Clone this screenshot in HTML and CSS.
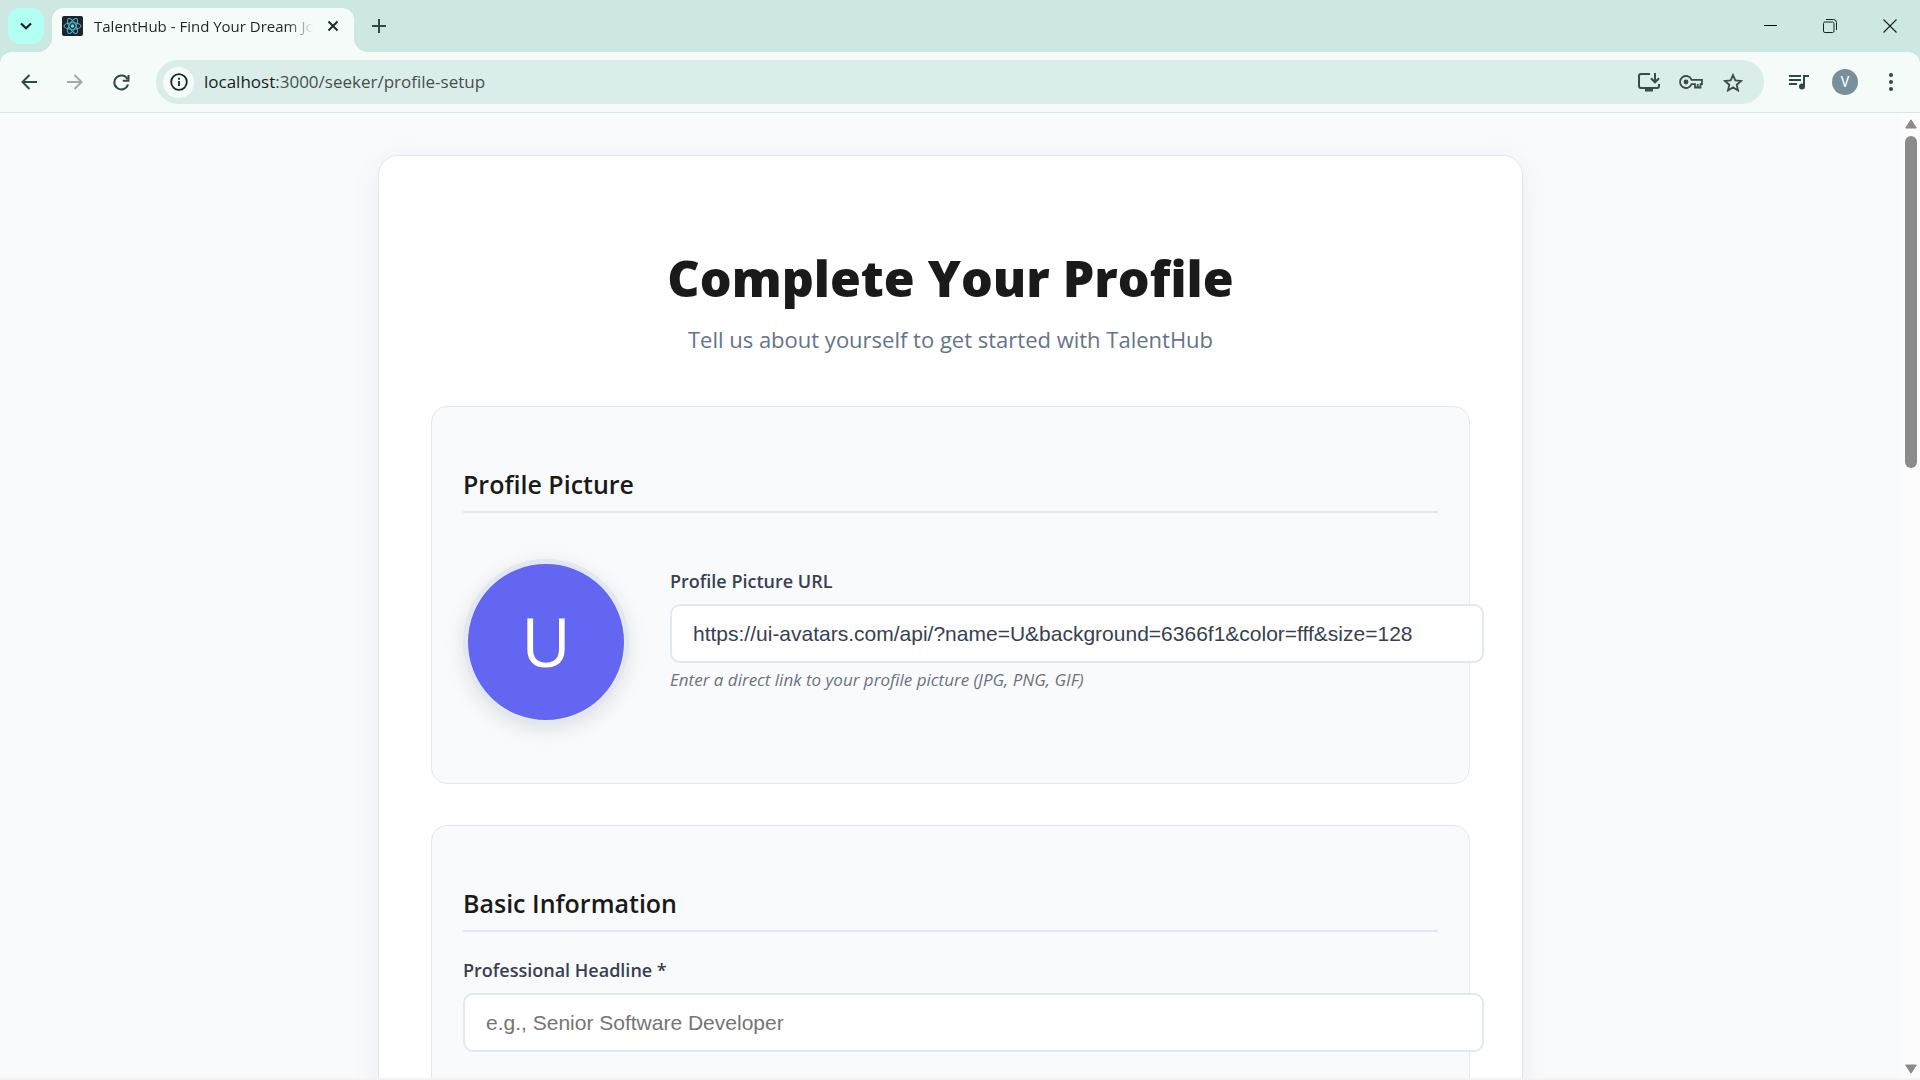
FILE: index.html
```html
<!DOCTYPE html>
<html lang="en">
<head>
<meta charset="utf-8">
<meta name="viewport" content="width=device-width, initial-scale=1">
<title>TalentHub - Find Your Dream Job</title>
<link rel="stylesheet" href="styles.css">
</head>
<body>
<div class="window">
  <header class="tabstrip">
    <button class="tab-search" aria-label="Search tabs">
      <svg width="12" height="8" viewBox="0 0 12 8"><path d="M1 1.5l5 4.7 5-4.7" fill="none" stroke="#10201d" stroke-width="2.2"/></svg>
    </button>
    <div class="tab">
      <svg class="favicon" width="21" height="20" viewBox="0 0 21 20">
        <rect width="21" height="20" rx="2" fill="#20232a"/>
        <g fill="none" stroke="#4fb8d3" stroke-width="1">
          <ellipse cx="10.500" cy="10" rx="8.500" ry="3.300"/>
          <ellipse cx="10.500" cy="10" rx="8.500" ry="3.300" transform="rotate(60 10.500 10)"/>
          <ellipse cx="10.500" cy="10" rx="8.500" ry="3.300" transform="rotate(120 10.500 10)"/>
        </g>
        <circle cx="10.500" cy="10" r="1.800" fill="#61dafb"/>
      </svg>
      <span class="tab-title">TalentHub - Find Your Dream Job</span>
      <button class="tab-close" aria-label="Close tab">
        <svg width="12" height="12" viewBox="0 0 12 12"><path d="M1.500 1.500l9 9M10.500 1.500l-9 9" stroke="#1d2b29" stroke-width="2"/></svg>
      </button>
    </div>
    <button class="new-tab" aria-label="New tab">
      <svg width="14" height="14" viewBox="0 0 14 14"><path d="M7 0v14M0 7h14" stroke="#2f4a46" stroke-width="2"/></svg>
    </button>
    <div class="window-controls">
      <button aria-label="Minimize"><svg width="14" height="14" viewBox="0 0 14 14"><path d="M1 6.500h13" stroke="#000"/></svg></button>
      <button aria-label="Restore"><svg width="14" height="14" viewBox="0 0 14 14" fill="none" stroke="#1c2423"><rect x=".5" y="3" width="10.500" height="10.500" rx="1.500"/><path d="M3 .5h7.500a3 3 0 0 1 3 3V11"/></svg></button>
      <button aria-label="Close"><svg width="14" height="14" viewBox="0 0 14 14"><path d="M.5.5l13 13M13.500.5l-13 13" stroke="#1c2423" stroke-width="1.200"/></svg></button>
    </div>
  </header>

  <nav class="toolbar">
    <button class="tool" aria-label="Back"><svg width="16" height="16" viewBox="0 0 16 16" fill="none" stroke="#2f4a46" stroke-width="2"><path d="M16 8H1.500M8.500 1L1.500 8l7 7"/></svg></button>
    <button class="tool" aria-label="Forward" disabled><svg width="16" height="16" viewBox="0 0 16 16" fill="none" stroke="#a1aaa8" stroke-width="2"><path d="M0 8h14.500M7.500 1l7 7-7 7"/></svg></button>
    <button class="tool" aria-label="Reload"><svg width="17" height="17" viewBox="0 0 17 17" fill="none" stroke="#2f4a46" stroke-width="2"><path d="M15 10.500A7 7 0 1 1 14.600 5.300"/><path d="M15.500 1v5.800H9.800"/></svg></button>
    <div class="omnibox">
      <button class="site-info" aria-label="Site information"><svg width="18" height="18" viewBox="0 0 18 18"><circle cx="9" cy="9" r="7.800" fill="none" stroke="#1c2624" stroke-width="1.800"/><path d="M9 8v5M9 4.800v2" stroke="#1c2624" stroke-width="1.800"/></svg></button>
      <a class="url" href="#profile"><span class="host">localhost</span>:3000/seeker/profile-setup</a>
      <button class="omni-tool" aria-label="Install app"><svg width="22" height="19" viewBox="0 0 22 19" fill="none" stroke="#3c4a48" stroke-width="2"><path d="M12 1H3a2 2 0 0 0-2 2v10a2 2 0 0 0 2 2h16a2 2 0 0 0 2-2v-2M17 0v9M13 5.300l4 4 4-4"/><path d="M7 17h8" stroke-width="3"/></svg></button>
      <button class="omni-tool" aria-label="Saved passwords"><svg width="24" height="14" viewBox="0 0 24 14" fill="none" stroke="#3c4a48" stroke-width="1.800"><path d="M12.600 4.800A6 6 0 1 0 12.600 9.200H16V12.500H21.500V9.200H23V4.800Z"/><circle cx="7" cy="7" r="2.400" fill="#3c4a48" stroke="none"/><path d="M18.700 9v3.500"/></svg></button>
      <button class="omni-tool" aria-label="Bookmark"><svg width="20" height="19" viewBox="0 0 20 19"><path d="M10 2l2.300 5.400 5.800.5-4.400 3.800 1.300 5.700-5-3-5 3 1.300-5.700L1.900 7.900l5.800-.5z" fill="none" stroke="#3c4a48" stroke-width="1.800"/></svg></button>
    </div>
    <button class="tool" aria-label="Media control"><svg width="20" height="16" viewBox="0 0 20 16" fill="none" stroke="#2f4a46" stroke-width="2"><path d="M0 2h12M0 6h12M0 10h8"/><path d="M15 13V2h5"/><circle cx="13" cy="12.500" r="3" fill="#2f4a46" stroke="none"/></svg></button>
    <button class="tool" aria-label="Account"><span class="account">V</span></button>
    <button class="tool" aria-label="Menu"><svg width="4" height="18" viewBox="0 0 4 18" fill="#2f4a46"><circle cx="2" cy="2" r="2"/><circle cx="2" cy="9" r="2"/><circle cx="2" cy="16" r="2"/></svg></button>
  </nav>

  <div class="viewport">
    <main class="page">
      <form class="card" id="profile">
        <div class="intro">
          <h1>Complete Your Profile</h1>
          <p>Tell us about yourself to get started with TalentHub</p>
        </div>
        <section class="panel">
          <h2>Profile Picture</h2>
          <div class="picture-row">
            <div class="avatar">U</div>
            <div class="field">
              <label for="picture">Profile Picture URL</label>
              <input id="picture" type="text" value="https://ui-avatars.com/api/?name=U&amp;background=6366f1&amp;color=fff&amp;size=128">
              <small>Enter a direct link to your profile picture (JPG, PNG, GIF)</small>
            </div>
          </div>
        </section>
        <section class="panel">
          <h2>Basic Information</h2>
          <div class="field">
            <label for="headline">Professional Headline *</label>
            <input id="headline" type="text" placeholder="e.g., Senior Software Developer">
          </div>
        </section>
      </form>
    </main>
    <div class="scrollbar">
      <svg width="12" height="10" viewBox="0 0 12 10"><path d="M6 .8L11.300 9H.7z" fill="#8b8b8b" stroke="#8b8b8b" stroke-linejoin="round"/></svg>
      <div class="track"><div class="thumb"></div></div>
      <svg width="12" height="10" viewBox="0 0 12 10"><path d="M6 9.200L11.300 1H.7z" fill="#8b8b8b" stroke="#8b8b8b" stroke-linejoin="round"/></svg>
    </div>
  </div>
</div>
</body>
</html>
```
FILE: styles.css
```css
* { box-sizing: border-box; }

body {
  margin: 0;
  font-family: "Open Sans", "Noto Sans", sans-serif;
}

button {
  display: flex;
  align-items: center;
  justify-content: center;
  padding: 0;
  border: 0;
  background: none;
  font: inherit;
}

.window {
  display: flex;
  flex-direction: column;
  height: 100vh;
  background: #cde8e2;
  border-bottom: 2px solid #f3f3f3;
}

/* Tab strip */
.tabstrip {
  display: flex;
  height: 52px;
  padding: 8px 0 0 8px;
}

.tab-search {
  width: 36px;
  height: 36px;
  border-radius: 12px;
  background: #b4fff3;
}

.tab {
  position: relative;
  display: flex;
  align-items: center;
  width: 302px;
  margin-left: 8px;
  padding: 0 11px 8px 10px;
  border-radius: 12px 12px 0 0;
  background: #f5fbf9;
}

.tab::before,
.tab::after {
  content: "";
  position: absolute;
  bottom: 0;
  width: 14px;
  height: 14px;
}

.tab::before {
  right: 100%;
  background: radial-gradient(circle at 0 0, transparent 14px, #f5fbf9 14px);
}

.tab::after {
  left: 100%;
  background: radial-gradient(circle at 100% 0, transparent 14px, #f5fbf9 14px);
}

.tab-title {
  flex: 1;
  margin-left: 11px;
  overflow: hidden;
  white-space: nowrap;
  font-size: 15px;
  line-height: 20px;
  color: #1c2624;
  -webkit-mask-image: linear-gradient(to right, #000 88%, transparent);
  mask-image: linear-gradient(to right, #000 88%, transparent);
}

.tab-close {
  width: 20px;
  height: 20px;
  margin-left: 10px;
}

.new-tab {
  width: 36px;
  height: 36px;
  margin-left: 7px;
}

.window-controls {
  display: flex;
  margin-left: auto;
}

.window-controls button {
  width: 60px;
  height: 36px;
}

/* Toolbar */
.toolbar {
  display: flex;
  align-items: center;
  padding: 8px 6px;
  border-bottom: 1px solid #d7e5e2;
  border-radius: 12px 12px 0 0;
  background: #f5fbf9;
}

.tool {
  width: 46px;
  height: 44px;
}

.omnibox {
  display: flex;
  flex: 1;
  align-items: center;
  height: 44px;
  margin: 0 12px;
  padding: 0 10px 0 7px;
  border-radius: 22px;
  background: #dbede8;
}

.site-info {
  width: 31px;
  height: 31px;
  border-radius: 50%;
  background: #f5fbf9;
}

.url {
  flex: 1;
  margin-left: 10px;
  font-size: 17px;
  line-height: 24px;
  color: #454f4d;
  text-decoration: none;
}

.host { color: #171d1c; }

.omni-tool {
  width: 42px;
  height: 36px;
}

.account {
  width: 26px;
  border-radius: 50%;
  background: #78909c;
  color: #fff;
  font-family: Roboto, sans-serif;
  font-size: 14px;
  line-height: 26px;
}

/* Page */
.viewport {
  display: flex;
  flex: 1;
  min-height: 0;
  background: #f8fafc;
}

.page {
  flex: 1;
  padding: 42px 32px;
  overflow: hidden;
}

.card {
  max-width: 1145px;
  margin: 0 auto;
  padding: 52px;
  border: 1px solid #e2e8f0;
  border-radius: 20px;
  background: #fff;
  box-shadow: 0 5px 30px rgba(30, 30, 90, 0.06);
}

.intro {
  padding-top: 34px;
  margin-bottom: 49px;
  text-align: center;
}

h1 {
  margin: 0 0 7px;
  font-size: 50px;
  font-weight: 800;
  line-height: 72px;
  color: #1a1a1a;
}

.intro p {
  margin: 0;
  font-size: 22px;
  line-height: 36px;
  color: #64748b;
}

.panel {
  padding: 31px;
  border: 1px solid #e5e7eb;
  border-radius: 16px;
  background: #f9fafc;
}

.panel + .panel { margin-top: 41px; }

h2 {
  margin: 28px 0 24px;
  padding-bottom: 9px;
  border-bottom: 2px solid #e2e8f0;
  font-size: 25px;
  font-weight: 600;
  line-height: 36px;
  color: #1a1a1a;
}

.picture-row {
  display: flex;
  align-items: center;
  gap: 41px;
  padding: 22px 0 27px;
}

.avatar {
  flex: none;
  width: 166px;
  height: 166px;
  border: 5px solid #e2e8f0;
  border-radius: 50%;
  background: #6366f1;
  box-shadow: 0 5px 20px rgba(0, 0, 0, 0.1);
  color: #fff;
  font-size: 68px;
  line-height: 154px;
  text-align: center;
}

.field {
  flex: 1;
  margin-bottom: 24px;
}

.field label {
  display: block;
  margin-bottom: 9px;
  font-size: 18px;
  font-weight: 600;
  line-height: 28px;
  color: #374151;
}

.field input {
  display: block;
  box-sizing: content-box;
  width: 100%;
  height: 23px;
  padding: 16px 21px;
  border: 2px solid #e2e8f0;
  border-radius: 10px;
  background: #fff;
  font-family: "Liberation Sans", Arial, sans-serif;
  font-size: 21px;
  color: #374151;
}

.field input::placeholder { color: #757575; }

.field small {
  display: block;
  margin-top: 4px;
  font-size: 17px;
  font-style: italic;
  line-height: 26px;
  color: #6b7280;
}

/* Scrollbar */
.scrollbar {
  display: flex;
  flex-direction: column;
  align-items: center;
  gap: 7px;
  width: 19px;
  padding: 6px 0 4px;
  background: #fcfcfc;
}

.track {
  flex: 1;
  width: 12px;
}

.thumb {
  height: 36%;
  border-radius: 6px;
  background: #8b8b8b;
}
```
